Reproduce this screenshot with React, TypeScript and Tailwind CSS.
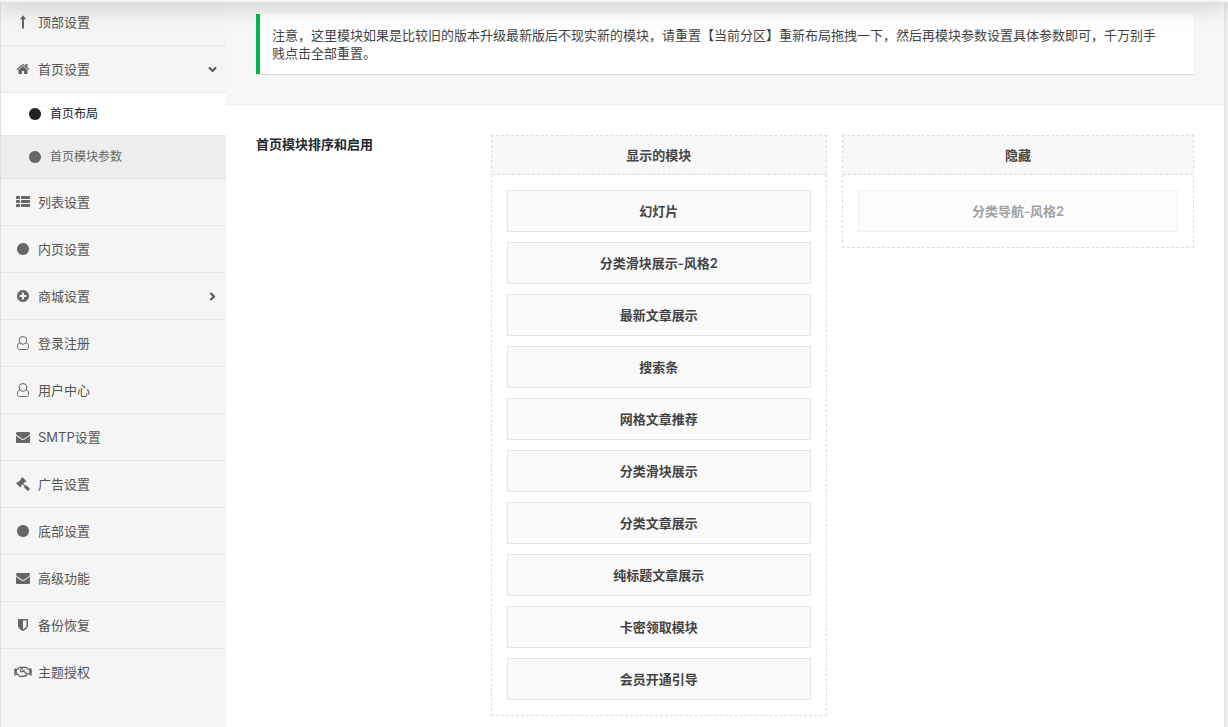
import React from 'react';
import { FaAngleDown, FaAngleRight, FaRegHandshake } from 'react-icons/fa';

const ICON_PATHS = {
  home: 'M1472 992v480q0 26-19 45t-45 19h-384v-384h-256v384h-384q-26 0-45-19t-19-45v-480q0-1 .5-3t.5-3l575-474 575 474q1 2 1 6zm223-69l-62 74q-8 9-21 11h-3q-13 0-21-7l-692-577-692 577q-12 8-24 7-13-2-21-11l-62-74q-8-10-7-23.5t11-21.5l719-599q32-26 76-26t76 26l244 204v-195q0-14 9-23t23-9h192q14 0 23 9t9 23v408l219 182q10 8 11 21.5t-7 23.5z',
  arrowUp: 'M1210 439q-8 19-29 19h-192v1302q0 14-9 23t-23 9h-122q-14 0-23-9t-9-23v-1302h-192q-21 0-29-19t5-35l285-340q10-11 24-11t25 10l284 341q14 16 5 35z',
  circle: 'M1664 896q0 209-103 385.5t-279.5 279.5-385.5 103-385.5-103-279.5-279.5-103-385.5 103-385.5 279.5-279.5 385.5-103 385.5 103 279.5 279.5 103 385.5z',
  list: 'M416 1152h-320q-96 0-96 96v192q0 96 96 96h320q96 0 96-96v-192q0-96-96-96zM416 640h-320q-96 0-96 96v192q0 96 96 96h320q96 0 96-96v-192q0-96-96-96zM416 128h-320q-96 0-96 96v192q0 96 96 96h320q96 0 96-96v-192q0-96-96-96zM1696 1152h-960q-96 0-96 96v192q0 96 96 96h960q96 0 96-96v-192q0-96-96-96zM1696 640h-960q-96 0-96 96v192q0 96 96 96h960q96 0 96-96v-192q0-96-96-96zM1696 128h-960q-96 0-96 96v192q0 96 96 96h960q96 0 96-96v-192q0-96-96-96z',
  plus: 'M1344 960v-128q0-26-19-45t-45-19h-256v-256q0-26-19-45t-45-19h-128q-26 0-45 19t-19 45v256h-256q-26 0-45 19t-19 45v128q0 26 19 45t45 19h256v256q0 26 19 45t45 19h128q26 0 45-19t19-45v-256h256q26 0 45-19t19-45zm320-64q0 209-103 385.5t-279.5 279.5-385.5 103-385.5-103-279.5-279.5-103-385.5 103-385.5 279.5-279.5 385.5-103 385.5 103 279.5 279.5 103 385.5z',
  envelope: 'M1792 710v794q0 66-47 113t-113 47h-1472q-66 0-113-47t-47-113v-794q44 49 101 87 362 246 497 345 57 42 92.5 65.5t94.5 48 110 24.5h2q51 0 110-24.5t94.5-48 92.5-65.5q170-123 498-345 57-39 100-87zm0-294q0 79-49 151t-122 123q-376 261-468 325-10 7-42.5 31t-54 38.5-52 32.5-57.5 27-50 9h-2q-23 0-50-9t-57.5-27-52-32.5-54-38.5-42.5-31q-91-64-262-182.5t-205-142.5q-62-42-117-115.5t-55-136.5q0-78 41.5-130t118.5-52h1472q65 0 112.5 47t47.5 113z',
  gavel: 'M1771 1536q0 53-37 90l-107 108q-39 37-91 37-53 0-90-37l-363-364q-38-36-38-90 0-53 43-96l-256-256-126 126q-14 14-34 14t-34-14q2 2 12.5 12t12.5 13 10 11.5 10 13.5 6 13.5 5.5 16.5 1.5 18q0 38-28 68-3 3-16.5 18t-19 20.5-18.5 16.5-22 15.5-22 9-26 4.5q-40 0-68-28l-408-408q-28-28-28-68 0-13 4.5-26t9-22 15.5-22 16.5-18.5 20.5-19 18-16.5q30-28 68-28 10 0 18 1.5t16.5 5.5 13.5 6 13.5 10 11.5 10 13 12.5 12 12.5q-14-14-14-34t14-34l348-348q14-14 34-14t34 14q-2-2-12.5-12t-12.5-13-10-11.5-10-13.5-6-13.5-5.5-16.5-1.5-18q0-38 28-68 3-3 16.5-18t19-20.5 18.5-16.5 22-15.5 22-9 26-4.5q40 0 68 28l408 408q28 28 28 68 0 13-4.5 26t-9 22-15.5 22-16.5 18.5-20.5 19-18 16.5q-30 28-68 28-10 0-18-1.5t-16.5-5.5-13.5-6-13.5-10-11.5-10-13-12.5-12-12.5q14 14 14 34t-14 34l-126 126 256 256q43-43 96-43 52 0 91 37l363 363q37 39 37 91z',
  shield: 'M1344 960v-640h-448v1137q119-63 213-137 235-184 235-360zm192-768v768q0 86-33.5 170.5t-83 150-118 127.5-126.5 103-121 77.5-89.5 49.5-42.5 20q-12 6-26 6t-26-6q-16-7-42.5-20t-89.5-49.5-121-77.5-126.5-103-118-127.5-83-150-33.5-170.5v-768q0-26 19-45t45-19h1152q26 0 45 19t19 45z',
};

type IconName = keyof typeof ICON_PATHS | 'user' | 'handshake';

const MenuIcon = ({ name }: { name: IconName }) => {
  if (name === 'handshake') {
    return <FaRegHandshake className="h-[14px] w-[18px] shrink-0" />;
  }
  if (name === 'user') {
    return (
      <svg viewBox="0 0 14 14" className="h-[14px] w-[14px] shrink-0" fill="none" stroke="currentColor" strokeWidth="1">
        <circle cx="7" cy="4.4" r="3.9" />
        <path d="M3.800 6.700C2 7.200 1.400 9.200 1.500 11.200c0 1.300.9 2.300 2.100 2.300h6.800c1.200 0 2.100-1 2.100-2.300.1-2-.5-4-2.300-4.500" />
      </svg>
    );
  }
  if (name === 'arrowUp') {
    return (
      <svg viewBox="0 0 14 14" className="h-[14px] w-[14px] shrink-0" fill="currentColor">
        <path d="M7 .3 10.100 4.200H8V13.500H6V4.200H3.900z" />
      </svg>
    );
  }
  return (
    <svg viewBox="0 0 1792 1792" className="h-[14px] w-[14px] shrink-0" fill="currentColor">
      <path d={ICON_PATHS[name]} />
    </svg>
  );
};

type MenuItem = { label: string; icon: IconName; more?: boolean; children?: string[] };

const menu: MenuItem[] = [
  { label: '顶部设置', icon: 'arrowUp' },
  { label: '首页设置', icon: 'home', children: ['首页布局', '首页模块参数'] },
  { label: '列表设置', icon: 'list' },
  { label: '内页设置', icon: 'circle' },
  { label: '商城设置', icon: 'plus', more: true },
  { label: '登录注册', icon: 'user' },
  { label: '用户中心', icon: 'user' },
  { label: 'SMTP设置', icon: 'envelope' },
  { label: '广告设置', icon: 'gavel' },
  { label: '底部设置', icon: 'circle' },
  { label: '高级功能', icon: 'envelope' },
  { label: '备份恢复', icon: 'shield' },
  { label: '主题授权', icon: 'handshake' },
];

const enabledModules = [
  '幻灯片',
  '分类滑块展示-风格2',
  '最新文章展示',
  '搜索条',
  '网格文章推荐',
  '分类滑块展示',
  '分类文章展示',
  '纯标题文章展示',
  '卡密领取模块',
  '会员开通引导',
];

const disabledModules = ['分类导航-风格2'];

const Sidebar = () => (
  <nav className="-mt-px w-[225px] shrink-0 bg-[#f5f5f5] text-[#555]">
    <ul>
      {menu.map((item, idx) => (
        <li key={item.label}>
          <a
            href="#"
            className={`flex h-[47px] items-center border-b pl-3 pr-[7px] text-[13px] leading-5 ${idx < menu.length - 1 ? 'border-[#e5e5e5]' : 'border-transparent'}`}
          >
            <span className="mr-[5px] flex w-5 shrink-0 justify-center text-[#666]">
              <MenuIcon name={item.icon} />
            </span>
            <span className="flex-1">{item.label}</span>
            {item.children && <FaAngleDown size={13} />}
            {item.more && <FaAngleRight size={13} />}
          </a>
          {item.children && (
            <ul>
              {item.children.map((child, cIdx) => (
                <li key={child}>
                  <a
                    href="#"
                    className={`flex h-[43px] items-center border-b border-[#e5e5e5] pl-6 text-xs ${cIdx === 0 ? 'bg-white text-[#222]' : 'bg-[#eee] text-[#666]'}`}
                  >
                    <span className="mr-[5px] flex w-5 shrink-0 justify-center">
                      <MenuIcon name="circle" />
                    </span>
                    {child}
                  </a>
                </li>
              ))}
            </ul>
          )}
        </li>
      ))}
    </ul>
  </nav>
);

const ModuleBox = ({ title, modules, muted }: { title: string; modules: string[]; muted?: boolean }) => (
  <section className="border border-dashed border-[#ddd] text-center text-[13px] font-semibold leading-5 text-[#444]">
    <h3 className="border-b border-dashed border-[#ddd] bg-[#f8f8f8] py-[9px]">{title}</h3>
    <ul className="flex flex-col gap-[10px] p-[15px]">
      {modules.map((name) => (
        <li
          key={name}
          className={`cursor-move border border-[#e5e5e5] bg-[#fafafa] py-[10px] ${muted ? 'opacity-50' : ''}`}
        >
          {name}
        </li>
      ))}
    </ul>
  </section>
);

const App = () => {
  return (
    <div className="min-h-screen bg-[#ececec] pr-[3px] font-['Inter','Noto_Sans_CJK_SC',sans-serif]">
      <div className="flex min-h-screen overflow-hidden border-x border-[#e0e0e0] bg-[#f5f5f5]">
        <Sidebar />

        <main className="min-w-0 flex-1 bg-white">
          <div className="border-b border-[#eee] bg-[#f7f7f7] px-[30px] pb-[30px] pt-[14px]">
            <p className="border-l-4 border-[#00b950] bg-white py-3 pl-3 pr-8 text-[13px] leading-[18px] text-[#444] shadow-[0_1px_1px_rgba(0,0,0,0.1)]">
              注意，这里模块如果是比较旧的版本升级最新版后不现实新的模块，请重置【当前分区】重新布局拖拽一下，然后再模块参数设置具体参数即可，千万别手贱点击全部重置。
            </p>
          </div>

          <div className="flex px-[30px] pb-3 pt-[30px]">
            <h2 className="w-1/4 shrink-0 text-[13px] font-semibold leading-[18px] text-[#23282d]">首页模块排序和启用</h2>
            <div className="grid min-w-0 flex-1 grid-cols-2 items-start">
              <div className="pr-[15px]">
                <ModuleBox title="显示的模块" modules={enabledModules} />
              </div>
              <ModuleBox title="隐藏" modules={disabledModules} muted />
            </div>
          </div>
        </main>
      </div>

      {/* Bottom edge of the sticky header, casting its shadow over the page */}
      <header className="pointer-events-none fixed inset-x-0 -top-12 h-[51px] border-b border-[#dedede] bg-[#f5f5f5] shadow-[0_5px_25px_rgba(0,0,0,0.15)]" />
    </div>
  );
};

export default App;
